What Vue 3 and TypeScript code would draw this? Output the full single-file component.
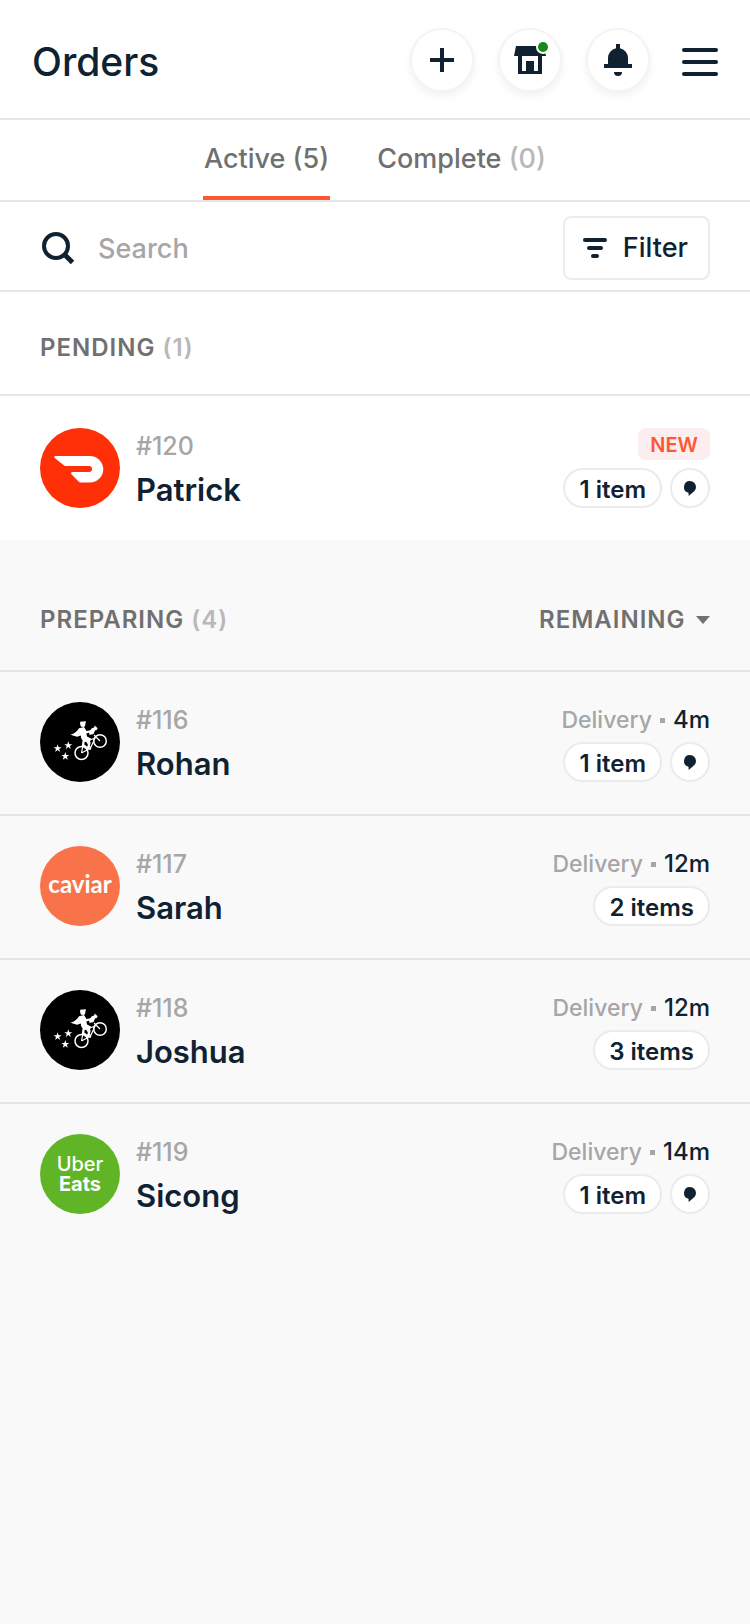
<script setup lang="ts">
import { ref } from 'vue'

type Service = 'doordash' | 'postmates' | 'caviar' | 'ubereats'

interface Order {
  id: number
  name: string
  service: Service
  items: number
  note: boolean
  minutes?: number
}

const pending: Order[] = [
  { id: 120, name: 'Patrick', service: 'doordash', items: 1, note: true },
]

const preparing: Order[] = [
  { id: 116, name: 'Rohan', service: 'postmates', items: 1, note: true, minutes: 4 },
  { id: 117, name: 'Sarah', service: 'caviar', items: 2, note: false, minutes: 12 },
  { id: 118, name: 'Joshua', service: 'postmates', items: 3, note: false, minutes: 12 },
  { id: 119, name: 'Sicong', service: 'ubereats', items: 1, note: true, minutes: 14 },
]

const sections = [
  { key: 'pending', title: 'PENDING', orders: pending },
  { key: 'preparing', title: 'PREPARING', orders: preparing },
]

const tab = ref<'active' | 'complete'>('active')
const query = ref('')
const sort = ref('remaining')
</script>

<template>
  <div class="page">
    <header class="header">
      <h1 class="title">Orders</h1>
      <button class="round" type="button" aria-label="Add order">
        <svg width="32" height="32" viewBox="0 0 32 32" fill="currentColor">
          <path d="M14 4h4v10h10v4H18v10h-4V18H4v-4h10z" />
        </svg>
      </button>
      <button class="round" type="button" aria-label="Store status">
        <svg width="40" height="40" viewBox="0 0 40 40">
          <path fill="currentColor" d="M6 6h28l2 10h-4v18H8V16H4z" />
          <path fill="#fff" d="M12 16h16v15h-4V21h-8v10h-4z" />
          <circle cx="33" cy="7" r="7" fill="#fff" />
          <circle cx="33" cy="7" r="5" fill="#178a17" />
        </svg>
      </button>
      <button class="round" type="button" aria-label="Notifications">
        <svg width="32" height="32" viewBox="0 0 32 32" fill="currentColor">
          <path d="M14 0h4v4.200a10 10 0 0 1 8 9.800v6h4v4H2v-4h4v-6a10 10 0 0 1 8-9.800zM12 28h8a4 4 0 0 1-8 0z" />
        </svg>
      </button>
      <button class="menu" type="button" aria-label="Menu">
        <svg width="36" height="36" viewBox="0 0 36 36" fill="currentColor">
          <rect y="6" width="36" height="4" rx="2" />
          <rect y="18" width="36" height="4" rx="2" />
          <rect y="30" width="36" height="4" rx="2" />
        </svg>
      </button>
    </header>

    <nav class="tabs">
      <button type="button" class="tab" :class="{ current: tab === 'active' }" @click="tab = 'active'">
        Active (5)
      </button>
      <button type="button" class="tab" :class="{ current: tab === 'complete' }" @click="tab = 'complete'">
        Complete <span class="count">(0)</span>
      </button>
    </nav>

    <div class="tools">
      <label class="search">
        <svg width="36" height="36" viewBox="0 0 36 36" fill="none" stroke="currentColor" stroke-width="4">
          <circle cx="16" cy="16" r="12" />
          <path d="M24.500 24.500l8 8" stroke-width="5" />
        </svg>
        <input v-model="query" type="text" placeholder="Search" aria-label="Search" />
      </label>
      <button class="filter" type="button">
        <svg width="24" height="24" viewBox="0 0 24 24" fill="currentColor">
          <rect y="2" width="24" height="4" rx="2" />
          <rect x="4" y="10" width="16" height="4" rx="2" />
          <rect x="8" y="18" width="8" height="4" rx="2" />
        </svg>
        Filter
      </button>
    </div>

    <section v-for="section in sections" :key="section.key" :class="section.key">
      <div class="heading">
        <h2>{{ section.title }} <span class="count">({{ section.orders.length }})</span></h2>
        <label v-if="section.key === 'preparing'" class="sort">
          <select v-model="sort" aria-label="Sort by">
            <option value="remaining">REMAINING</option>
          </select>
          <svg width="14" height="8" viewBox="0 0 14 8" fill="currentColor"><path d="M0 0h14L7 8z" /></svg>
        </label>
      </div>
      <ul class="orders">
        <li v-for="order in section.orders" :key="order.id" class="order">
          <div class="avatar" :class="order.service">
            <svg v-if="order.service === 'doordash'" viewBox="0 0 80 80" fill="#fff">
              <path d="M15.200 28H50a13 13 0 0 1 0 26.500H40.500a3 3 0 0 1-2-.900l-7-7.300c-.900-1-.400-2.300.900-2.300H49a3 3 0 0 0 0-6H25.500a3 3 0 0 1-2-.900l-8.800-7.200C14 29 14.200 28 15.200 28z" />
            </svg>
            <svg v-else-if="order.service === 'postmates'" viewBox="0 0 80 80" fill="#fff">
              <defs>
                <path id="star" d="M0-4.200 1-1.300H4L1.600.5 2.500 3.400 0 1.600-2.500 3.400-1.600.5-4-1.300H-1z" />
              </defs>
              <use href="#star" x="17.600" y="46.500" />
              <use href="#star" x="28.300" y="43.500" />
              <use href="#star" x="25.300" y="54.300" />
              <g fill="none" stroke="#fff">
                <circle cx="60" cy="39" r="6.300" stroke-width="1.500" />
                <circle cx="41.500" cy="51" r="6.500" stroke-width="1.500" />
                <path d="M41.500 51l2-11M41.500 51l9-5 5-11M60 39l-6-6M50.500 46l-4-7 9-3" stroke-width="1.200" />
                <path d="M46 37l3.500 4-1.500 5 3 1M44 37l-1 6 4 3" stroke-width="2.200" />
              </g>
              <circle cx="42.800" cy="22.600" r="2.500" />
              <path d="M40 19.800l6-.5-.6 2.400-5 .5z" />
              <path d="M39 26.300l5-1.300 2.500 4 4.500-.8.400 1.500-5 1.800.6 3 4 2-1.200 4-6.300-1-2.500-3.500v-2.500l-4 1.200-6.500-2c4-1 6.500-3 8.500-6.400z" />
              <path d="M49 30l2.500-3.500 2.500-1 1-2 1 1.300 1.700 1.400-1 1.800-1.700.5-1.500 3.500-4 1z" />
            </svg>
            <span v-else-if="order.service === 'caviar'">caviar</span>
            <template v-else>
              <span>Uber</span>
              <strong>Eats</strong>
            </template>
          </div>
          <div class="who">
            <span class="number">#{{ order.id }}</span>
            <span class="name">{{ order.name }}</span>
          </div>
          <div class="status">
            <span v-if="order.minutes === undefined" class="new">NEW</span>
            <span v-else class="eta">Delivery<i class="dot"></i><b>{{ order.minutes }}m</b></span>
            <div class="pills">
              <span class="pill">{{ order.items }} {{ order.items === 1 ? 'item' : 'items' }}</span>
              <button v-if="order.note" class="note" type="button" aria-label="View note">
                <svg width="12" height="15" viewBox="0 0 12 15" fill="currentColor">
                  <path d="M6 0a6 6 0 0 1 6 6c0 2.300-1.200 4-3 5.200L4.700 15l-.2-3.200A6 6 0 0 1 6 0z" />
                </svg>
              </button>
            </div>
          </div>
        </li>
      </ul>
    </section>
  </div>
</template>

<style>
body {
  margin: 0;
  background: #f9f9f9;
}
</style>

<style scoped>
.page {
  min-height: 100vh;
  background: #f9f9f9;
  color: #102231;
  font-family: Inter, "Liberation Sans", sans-serif;
  font-weight: 500;
}

button,
input,
select {
  margin: 0;
  padding: 0;
  border: 0;
  background: none;
  color: inherit;
  font: inherit;
  outline: none;
}

svg {
  display: block;
  flex: none;
}

.header {
  display: flex;
  align-items: center;
  gap: 24px;
  padding: 28px 32px 26px;
  border-bottom: 2px solid #e6e6e6;
  background: #fff;
}

.title {
  flex: 1;
  margin: 0;
  padding-top: 4px;
  font-size: 39px;
  line-height: 48px;
  font-weight: 500;
}

.round {
  display: flex;
  align-items: center;
  justify-content: center;
  box-sizing: border-box;
  width: 64px;
  height: 64px;
  border: 2px solid #f4f4f4;
  border-radius: 50%;
  background: #fff;
  box-shadow: 0 4px 8px rgba(0, 0, 0, 0.06);
}

.menu {
  margin-left: 8px;
}

.tabs {
  display: flex;
  justify-content: center;
  gap: 46px;
  border-bottom: 2px solid #e6e6e6;
  background: #fff;
}

.tab {
  padding: 2px 1px 0;
  border-bottom: 4px solid transparent;
  color: #707070;
  font-size: 27px;
  line-height: 74px;
}

.tab.current {
  border-color: #ff5733;
}

.count {
  color: #b8b8b8;
}

.tools {
  display: flex;
  align-items: center;
  justify-content: space-between;
  padding: 14px 40px 10px;
  border-bottom: 2px solid #e6e6e6;
  background: #fff;
  font-size: 27px;
}

.search {
  display: flex;
  flex: 1;
  align-items: center;
  gap: 22px;
}

.search input {
  flex: 1;
  min-width: 0;
  padding-top: 2px;
  line-height: 40px;
}

.search input::placeholder {
  color: #a6a6a6;
  opacity: 1;
}

.filter {
  display: flex;
  align-items: center;
  gap: 16px;
  padding: 0 20px 0 18px;
  border: 2px solid #ebebeb;
  border-radius: 8px;
  line-height: 60px;
}

.pending {
  background: #fff;
}

.heading {
  display: flex;
  align-items: center;
  justify-content: space-between;
  padding: 40px 40px 30px;
  border-bottom: 2px solid #e6e6e6;
  color: #707070;
  font-size: 24px;
  line-height: 32px;
  font-weight: 600;
  letter-spacing: 1px;
}

.preparing .heading {
  padding-top: 64px;
  padding-bottom: 34px;
}

.heading h2 {
  margin: 0;
  font-size: inherit;
  font-weight: inherit;
}

.sort {
  display: flex;
  align-items: center;
  gap: 10px;
}

.sort select {
  appearance: none;
  letter-spacing: inherit;
}

.orders {
  margin: 0;
  padding: 0;
  list-style: none;
}

.order {
  display: flex;
  gap: 16px;
  padding: 30px 40px 32px;
}

.pending .order {
  padding-top: 32px;
}

.order + .order {
  border-top: 2px solid #e6e6e6;
}

.avatar {
  display: flex;
  flex: none;
  flex-direction: column;
  align-items: center;
  justify-content: center;
  width: 80px;
  height: 80px;
  border-radius: 50%;
  color: #fff;
}

.avatar svg {
  width: 100%;
}

.doordash {
  background: #ff3008;
}

.postmates {
  background: #000;
}

.caviar {
  background: #f9734a;
  font-family: Lato, sans-serif;
  font-size: 24px;
  line-height: 24px;
  font-weight: 700;
}

.caviar span {
  padding-bottom: 4px;
}

.ubereats {
  background: #60b527;
  font-size: 20px;
  line-height: 20px;
}

.ubereats strong {
  font-weight: 700;
}

.who {
  display: flex;
  flex: 1;
  flex-direction: column;
  gap: 8px;
}

.number {
  color: #a6a6a6;
  font-size: 25px;
  line-height: 36px;
}

.name {
  font-size: 31px;
  line-height: 36px;
  font-weight: 600;
}

.status {
  display: flex;
  flex-direction: column;
  align-items: flex-end;
  justify-content: space-between;
}

.new {
  padding: 2px 12px 0;
  border-radius: 8px;
  background: #fceeee;
  color: #ff5733;
  font-size: 20px;
  line-height: 30px;
  font-weight: 600;
}

.eta {
  display: flex;
  align-items: center;
  gap: 8px;
  color: #a6a6a6;
  font-size: 23px;
  line-height: 36px;
}

.eta b {
  color: #102231;
  font-size: 24px;
  font-weight: 500;
}

.dot {
  width: 5px;
  height: 5px;
  background: currentColor;
}

.pills {
  display: flex;
  gap: 8px;
}

.pill {
  padding: 4px 14px 0;
  border: 2px solid #ebebeb;
  border-radius: 20px;
  background: #fff;
  font-size: 24px;
  line-height: 32px;
  font-weight: 600;
}

.note {
  display: flex;
  align-items: center;
  justify-content: center;
  box-sizing: border-box;
  width: 40px;
  height: 40px;
  border: 2px solid #ebebeb;
  border-radius: 50%;
  background: #fff;
}
</style>
